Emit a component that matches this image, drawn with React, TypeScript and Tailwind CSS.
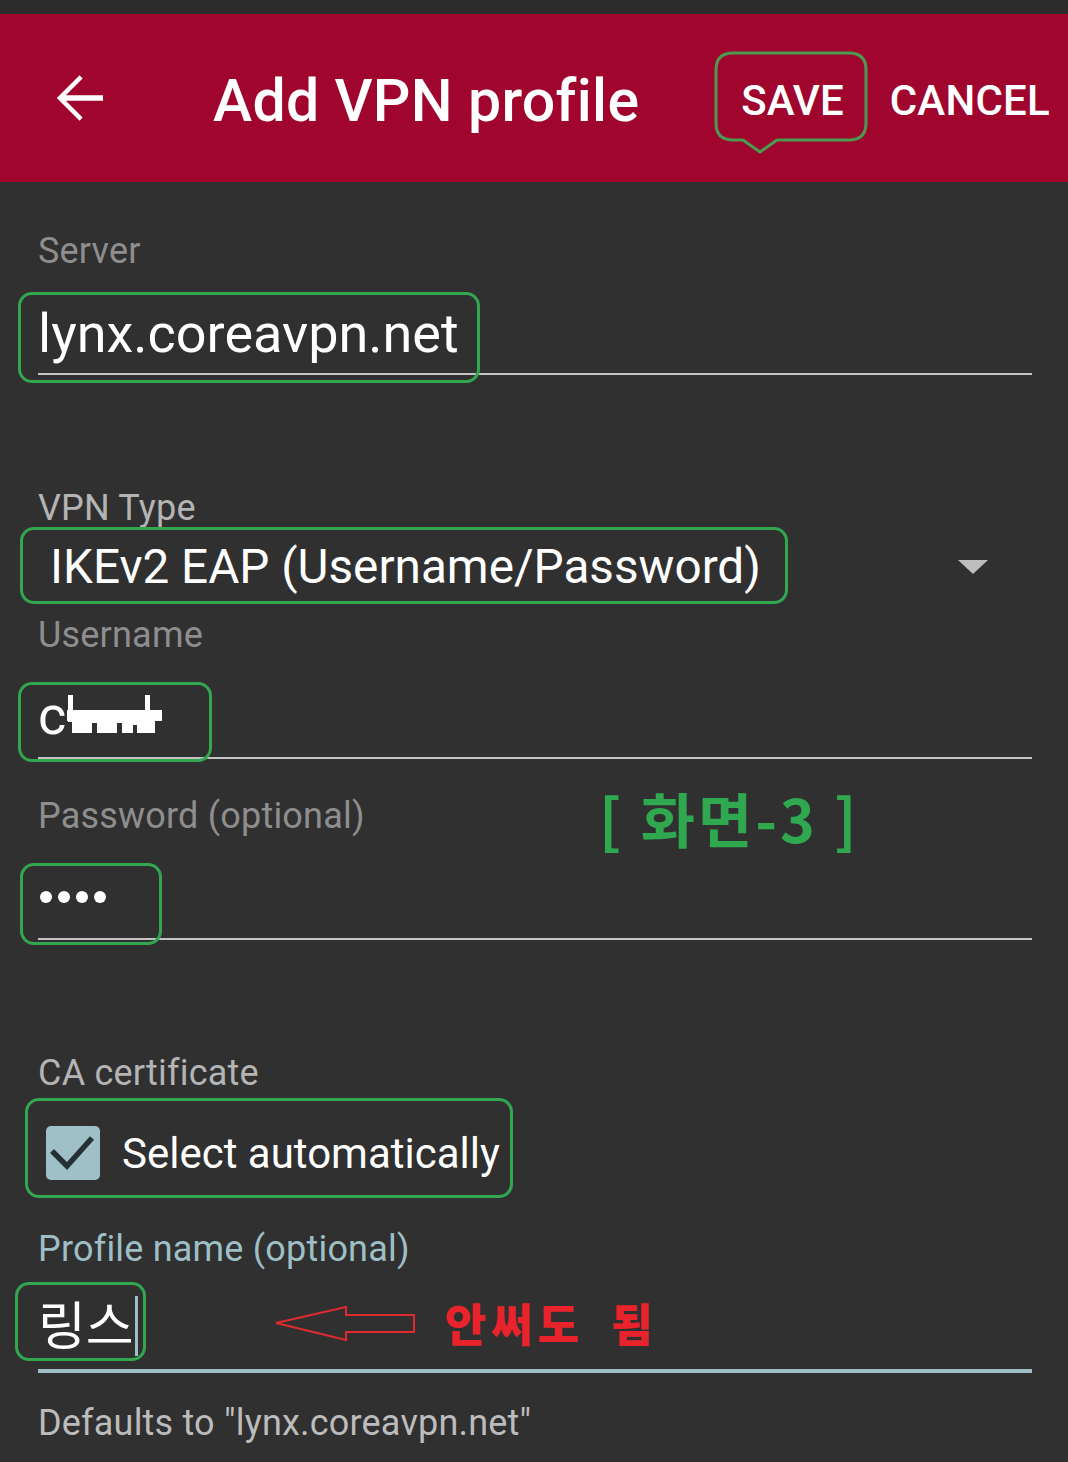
import React from "react";

const GREEN = "border-[#33a650]";

function GreenBox({ className }: { className: string }) {
  return <div className={`pointer-events-none absolute rounded-[14px] border-[3px] ${GREEN} ${className}`} />;
}

const LABEL = "text-[36px] leading-[42px] tracking-[0.2px]";

export default function App() {
  return (
    <div className="w-[1068px] h-[1462px] overflow-hidden bg-[#303030] font-['Roboto','Noto_Sans_CJK_KR',sans-serif] text-white">
      <div className="h-[14px] bg-[#2c2c2c]" />
      <header className="relative flex h-[168px] items-center bg-[#a0052d]">
        <svg viewBox="4 4 16 16" className="ml-[55px] h-[48px] w-[48px]" fill="#ffffff">
          <path d="M20 11.1H7.6l5.6-5.6L12.2 4.4 4.6 12l7.6 7.6 1-1.1-5.6-5.6H20v-1.8z" />
        </svg>
        <div className="ml-[110px] mt-[4px] text-[59px] font-medium leading-none tracking-[0.3px]">Add VPN profile</div>
        <div className="ml-[102px] mt-[6px] text-[42px] font-medium leading-none">SAVE</div>
        <div className="ml-[46px] mt-[6px] text-[42px] font-medium leading-none tracking-[0.2px]">CANCEL</div>
        <svg className="pointer-events-none absolute left-[710px] top-[33px]" width="162" height="112" viewBox="0 0 162 112" fill="none">
          <path
            d="M23 6H139Q156 6 156 23V76Q156 93 139 93H67L50 105L33 93H23Q6 93 6 76V23Q6 6 23 6Z"
            stroke="#4c9a50"
            strokeWidth="3"
            strokeLinejoin="round"
          />
        </svg>
      </header>

      <main className="pl-[38px] pr-[36px]">
        {/* Server */}
        <div className={`mt-[48px] ${LABEL} text-[#8e8e8e]`}>Server</div>
        <div className="relative mt-[30px] border-b-2 border-[#c4c4c4] pb-[7px] text-[54px] leading-[64px]">
          lynx.coreavpn.net
          <GreenBox className="-left-[20px] -top-[10px] h-[91px] w-[462px]" />
        </div>

        {/* VPN Type */}
        <div className={`mt-[112px] ${LABEL} text-[#b4b4b4]`}>VPN Type</div>
        <div className="relative mt-[10px] flex h-[56px] items-center justify-between">
          <div className="pl-[12px] text-[47.7px] leading-[56px]">IKEv2 EAP (Username/Password)</div>
          <svg width="30" height="14" viewBox="0 0 30 14" className="mr-[44px]">
            <path d="M0 0H30L15 14Z" fill="#bdbdbd" />
          </svg>
          <GreenBox className="-left-[18px] -top-[12px] h-[77px] w-[768px]" />
        </div>

        {/* Username */}
        <div className={`mt-[19px] ${LABEL} text-[#8e8e8e]`}>Username</div>
        <div className="relative mt-[28px] border-b-2 border-[#c4c4c4] pb-[9px] text-[54px] leading-[64px]">
          c
          <svg className="absolute left-[29px] top-[9px]" width="95" height="42" viewBox="0 0 95 42">
            <rect x="1" y="2" width="5" height="27" fill="#fff" />
            <rect x="78" y="2" width="5" height="38" fill="#fff" />
            <rect x="0" y="17" width="95" height="11" fill="#fff" />
            <rect x="5" y="28" width="83" height="12" fill="#fff" />
            <rect x="25" y="30" width="5" height="10" fill="#303030" />
            <rect x="50" y="30" width="5" height="10" fill="#303030" />
            <rect x="66" y="32" width="4" height="8" fill="#303030" />
          </svg>
          <GreenBox className="-left-[20px] -top-[2px] h-[80px] w-[194px]" />
        </div>

        {/* Password */}
        <div className={`relative mt-[36px] ${LABEL} text-[#8e8e8e]`}>
          Password (optional)
          <div className="absolute left-[561px] -top-[7px] whitespace-pre font-['Noto_Sans_CJK_KR',sans-serif] text-[59px] font-bold leading-[60px] tracking-[3px] text-[#2fa84f]">
            [ 화면-3 ]
          </div>
        </div>
        <div className="relative border-b-2 border-[#c4c4c4] pb-[35px] pt-[54px]">
          <div className="flex gap-[6px] pl-[2px]">
            <div className="h-[12px] w-[12px] rounded-full bg-white" />
            <div className="h-[12px] w-[12px] rounded-full bg-white" />
            <div className="h-[12px] w-[12px] rounded-full bg-white" />
            <div className="h-[12px] w-[12px] rounded-full bg-white" />
          </div>
          <GreenBox className="-left-[18px] top-[26px] h-[82px] w-[142px]" />
        </div>

        {/* CA certificate */}
        <div className={`mt-[112px] ${LABEL} text-[#b4b4b4]`}>CA certificate</div>
        <div className="relative mt-[9px] flex h-[100px] items-center">
          <div className="ml-[8px] flex h-[54px] w-[54px] items-center justify-center rounded-[5px] bg-[#9fc0c7]">
            <svg width="54" height="54" viewBox="0 0 54 54" fill="none">
              <path d="M6 25L21 40L46 12" stroke="#263135" strokeWidth="5.5" />
            </svg>
          </div>
          <div className="ml-[22px] mt-[2px] text-[42px] leading-[48px]">Select automatically</div>
          <GreenBox className="-left-[13px] -top-[5px] h-[100px] w-[488px]" />
        </div>

        {/* Profile name */}
        <div className={`mt-[25px] ${LABEL} text-[#9dbfc5]`}>Profile name (optional)</div>
        <div className="relative mt-[20px] flex items-center border-b-[4px] border-[#9dbfc5] pb-[13px]">
          <div className="font-['Noto_Sans_CJK_KR',sans-serif] text-[52px] leading-[64px]">링스</div>
          <div className="ml-[1px] mt-[6px] h-[60px] w-[3px] bg-[#9dbfc5]" />
          <svg className="ml-[136px] mt-[2px]" width="142" height="38" viewBox="0 0 142 38" fill="none">
            <path d="M2 18L72 2V10H140V27H72V35Z" stroke="#e02a30" strokeWidth="2" strokeLinejoin="miter" />
          </svg>
          <div className="ml-[29px] flex font-['Noto_Sans_CJK_KR',sans-serif] text-[45px] font-black leading-[64px] tracking-[5px] text-[#e8232b]">
            <span>안써도</span>
            <span className="ml-[27px]">됨</span>
          </div>
          <GreenBox className="-left-[23px] top-[-8px] h-[79px] w-[131px]" />
        </div>

        {/* Defaults */}
        <div className={`mt-[29px] ${LABEL} text-[#bcbcbc]`}>Defaults to "lynx.coreavpn.net"</div>
      </main>
    </div>
  );
}
